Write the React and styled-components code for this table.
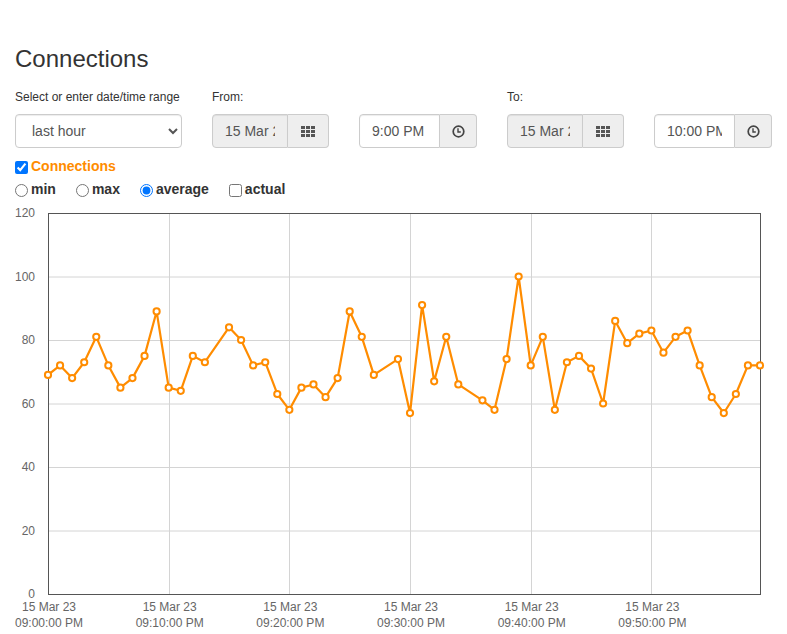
import React from "react";
import styled, { createGlobalStyle } from "styled-components";

const GlobalStyle = createGlobalStyle`
  html, body { margin: 0; padding: 0; background: #fff; overflow: hidden; }
  body {
    font-family: "Liberation Sans", Arial, Helvetica, sans-serif;
    font-size: 14px;
    line-height: 1.42857;
    color: #333;
  }
  * { box-sizing: border-box; }
`;

const Page = styled.div`
  width: 787px;
  height: 634px;
  overflow: hidden;
`;

const Header = styled.div`
  padding: 46px 15px 0;
`;

const Title = styled.h2`
  margin: 0;
  font-size: 24px;
  font-weight: 500;
  line-height: 1.1;
  color: #333;
`;

const FormRow = styled.div`
  display: flex;
  gap: 30px;
  margin-top: 17px;
  align-items: flex-start;
`;

const Field = styled.div`
  display: flex;
  flex-direction: column;
`;

const Label = styled.label`
  display: block;
  height: 17px;
  margin-bottom: 8px;
  font-size: 12px;
  line-height: 17px;
  color: #333;
`;

const Select = styled.select`
  width: 167px;
  height: 34px;
  padding: 6px 12px;
  font-family: inherit;
  font-size: 14px;
  color: #555;
  background: #fff;
  border: 1px solid #ccc;
  border-radius: 4px;
  box-shadow: inset 0 1px 1px rgba(0, 0, 0, 0.075);
`;

const InputGroup = styled.div`
  display: flex;
  height: 34px;
`;

const Input = styled.input`
  width: ${(p) => p.$w}px;
  height: 34px;
  padding: 6px 12px;
  font-family: inherit;
  font-size: 14px;
  color: #555;
  background: ${(p) => (p.$disabled ? "#eee" : "#fff")};
  border: 1px solid #ccc;
  border-radius: 4px 0 0 4px;
  box-shadow: inset 0 1px 1px rgba(0, 0, 0, 0.075);
  outline: none;
`;

const Addon = styled.span`
  display: flex;
  align-items: center;
  justify-content: center;
  width: ${(p) => p.$w}px;
  height: 34px;
  background: #eee;
  border: 1px solid #ccc;
  border-left: 0;
  border-radius: 0 4px 4px 0;
  color: #555;
`;

const CheckRow = styled.label`
  display: flex;
  align-items: center;
  height: 20px;
  margin-top: 9px;
  font-weight: bold;
  font-size: 14px;
  color: #ff8c00;
`;

const Box = styled.input`
  width: 13px;
  height: 13px;
  margin: 0 3px 0 0;
`;

const RadioRow = styled.div`
  display: flex;
  align-items: center;
  gap: 20px;
  height: 20px;
  margin-top: 3px;
`;

const Option = styled.label`
  display: flex;
  align-items: center;
  font-weight: bold;
  font-size: 14px;
  color: #333;
`;

const ChartSvg = styled.svg`
  display: block;
  margin-top: 4px;
`;

const GridIcon = () => (
  <svg width="14" height="11" viewBox="0 0 14 11">
    {[0, 1, 2].map((r) =>
      [0, 1, 2].map((c) => (
        <rect key={`${r}-${c}`} x={c * 5} y={r * 4} width="4" height="3" fill="#555" />
      ))
    )}
  </svg>
);

const ClockIcon = () => (
  <svg width="13" height="13" viewBox="0 0 13 13">
    <circle cx="6.5" cy="6.5" r="5.3" fill="none" stroke="#444" strokeWidth="1.7" />
    <path d="M6 3.2 V7 H8.8" fill="none" stroke="#444" strokeWidth="1.4" />
  </svg>
);

const data = [
  [0, 69], [1, 72], [2, 68], [3, 73], [4, 81], [5, 72], [6, 65], [7, 68], [8, 75], [9, 89],
  [10, 65], [11, 64], [12, 75], [13, 73], [15, 84], [16, 80], [17, 72], [18, 73], [19, 63],
  [20, 58], [21, 65], [22, 66], [23, 62], [24, 68], [25, 89], [26, 81], [27, 69], [29, 74],
  [30, 57], [31, 91], [32, 67], [33, 81], [34, 66], [36, 61], [37, 58], [38, 74], [39, 100],
  [40, 72], [41, 81], [42, 58], [43, 73], [44, 75], [45, 71], [46, 60], [47, 86], [48, 79],
  [49, 82], [50, 83], [51, 76], [52, 81], [53, 83], [54, 72], [55, 62], [56, 57], [57, 63],
  [58, 72], [59, 72],
];

const X0 = 48;
const X1 = 760;
const Y0 = 594;
const Y1 = 213;
const xs = (m) => X0 + (m * (X1 - X0)) / 59;
const ys = (v) => Y0 - (v * (Y0 - Y1)) / 120;

const Chart = () => {
  const pts = data.map(([m, v]) => [xs(m), ys(v)]);
  const d = pts.map((p, i) => `${i ? "L" : "M"}${p[0].toFixed(2)} ${p[1].toFixed(2)}`).join(" ");
  const yTicks = [0, 20, 40, 60, 80, 100, 120];
  const xTicks = [0, 10, 20, 30, 40, 50];
  return (
    <ChartSvg width="787" height="426" viewBox="0 204 787 426">
      {yTicks.slice(1, -1).map((v) => (
        <line key={v} x1={X0} x2={X1} y1={ys(v) + 0.5} y2={ys(v) + 0.5} stroke="#d4d4d4" strokeWidth="1" />
      ))}
      {xTicks.slice(1).map((m) => (
        <line key={m} x1={Math.round(xs(m)) + 0.5} x2={Math.round(xs(m)) + 0.5} y1={Y1} y2={Y0} stroke="#d4d4d4" strokeWidth="1" />
      ))}
      <rect x={X0 + 0.5} y={Y1 + 0.5} width={X1 - X0} height={Y0 - Y1} fill="none" stroke="#555" strokeWidth="1" />
      {yTicks.map((v) => (
        <text key={v} x="35" y={ys(v)} dy="0.35em" textAnchor="end" fontSize="12" fill="#666" fontFamily="Liberation Sans, Arial, sans-serif">
          {v}
        </text>
      ))}
      {xTicks.map((m) => {
        const mm = String(m).padStart(2, "0");
        return (
          <text key={m} x={xs(m) + 1} textAnchor="middle" fontSize="12" fill="#666" fontFamily="Liberation Sans, Arial, sans-serif">
            <tspan x={xs(m) + 1} y="611">15 Mar 23</tspan>
            <tspan x={xs(m) + 1} y="627">{`09:${mm}:00 PM`}</tspan>
          </text>
        );
      })}
      <path d={d} fill="none" stroke="#ff8c00" strokeWidth="2.2" strokeLinejoin="round" />
      {pts.map((p, i) => (
        <circle key={i} cx={p[0]} cy={p[1]} r="3.1" fill="#fff" stroke="#ff8c00" strokeWidth="2" />
      ))}
    </ChartSvg>
  );
};

export default function App() {
  return (
    <Page>
      <GlobalStyle />
      <Header>
        <Title>Connections</Title>
        <FormRow>
          <Field>
            <Label>Select or enter date/time range</Label>
            <Select defaultValue="last hour">
              <option>last hour</option>
              <option>last day</option>
              <option>last week</option>
            </Select>
          </Field>
          <Field>
            <Label>From:</Label>
            <InputGroup>
              <Input $w={76} $disabled readOnly defaultValue="15 Mar 2023" />
              <Addon $w={41}><GridIcon /></Addon>
            </InputGroup>
          </Field>
          <Field>
            <Label />
            <InputGroup>
              <Input $w={81} readOnly defaultValue="9:00 PM" />
              <Addon $w={37}><ClockIcon /></Addon>
            </InputGroup>
          </Field>
          <Field>
            <Label>To:</Label>
            <InputGroup>
              <Input $w={76} $disabled readOnly defaultValue="15 Mar 2023" />
              <Addon $w={41}><GridIcon /></Addon>
            </InputGroup>
          </Field>
          <Field>
            <Label />
            <InputGroup>
              <Input $w={81} readOnly defaultValue="10:00 PM" />
              <Addon $w={37}><ClockIcon /></Addon>
            </InputGroup>
          </Field>
        </FormRow>
        <CheckRow>
          <Box type="checkbox" defaultChecked />
          Connections
        </CheckRow>
        <RadioRow>
          <Option><Box type="radio" name="agg" />min</Option>
          <Option><Box type="radio" name="agg" />max</Option>
          <Option><Box type="radio" name="agg" defaultChecked />average</Option>
          <Option><Box type="checkbox" />actual</Option>
        </RadioRow>
      </Header>
      <Chart />
    </Page>
  );
}
